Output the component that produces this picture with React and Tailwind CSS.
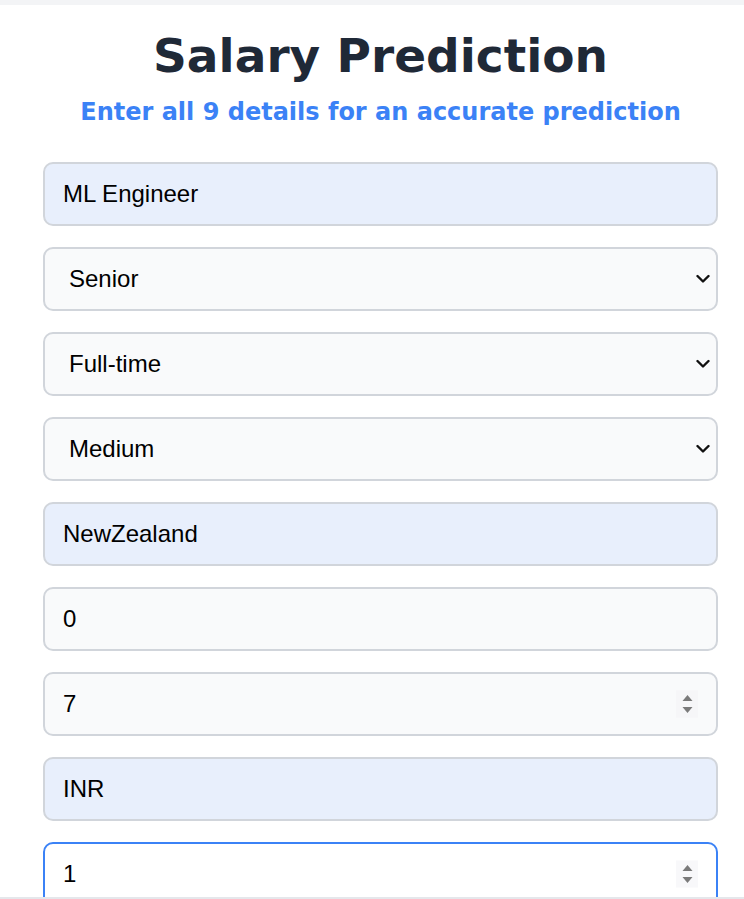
import React, { useState } from 'react';

function Chevron() {
  return (
    <svg
      className="pointer-events-none absolute right-[8px] top-1/2 -translate-y-1/2"
      width="14"
      height="9"
      viewBox="0 0 14 9"
      fill="none"
    >
      <path d="M1.5 1.5 L7 7 L12.5 1.5" stroke="#111" strokeWidth="2.4" strokeLinecap="round" strokeLinejoin="round" />
    </svg>
  );
}

function Spinner() {
  return (
    <div className="pointer-events-none absolute right-[20px] top-1/2 -translate-y-1/2 w-[22px] h-[27px] bg-[#f3f4f6]/60 flex flex-col items-center justify-center gap-[5px]">
      <svg width="11" height="7" viewBox="0 0 11 7">
        <path d="M5.5 0.5 L10.5 6.5 L0.5 6.5 Z" fill="#7a7a7a" />
      </svg>
      <svg width="11" height="7" viewBox="0 0 11 7">
        <path d="M0.5 0.5 L10.5 0.5 L5.5 6.5 Z" fill="#7a7a7a" />
      </svg>
    </div>
  );
}

export default function App() {
  const [form, setForm] = useState({
    job: 'ML Engineer',
    level: 'Senior',
    type: 'Full-time',
    size: 'Medium',
    country: 'NewZealand',
    remote: '0',
    years: '7',
    currency: 'INR',
    count: '1',
  });

  const set = (k) => (e) => setForm({ ...form, [k]: e.target.value });

  const shape = 'w-full h-[64px] rounded-[10px] border-2 px-[18px] text-[24px] text-black outline-none';
  const base = shape + ' border-[#d1d5db]';
  const filled = base + ' bg-[#e8effc]';
  const plain = base + ' bg-[#f9fafb]';
  const select = plain + ' appearance-none pl-[24px] pr-[40px]';
  const number =
    ' [appearance:textfield] [&::-webkit-inner-spin-button]:appearance-none [&::-webkit-outer-spin-button]:appearance-none';

  return (
    <div className="h-screen flex flex-col overflow-hidden bg-white font-['Liberation_Sans',Arial,sans-serif]">
      <div className="h-[5px] bg-[#f3f4f6] shrink-0" />
      <main className="flex-1 overflow-hidden pl-[43px] pr-[26px]">
        <h1 className="mt-[21px] text-center text-[47px] leading-[60px] font-bold text-[#1f2937] font-['DejaVu_Sans',sans-serif]">
          Salary Prediction
        </h1>
        <p className="mt-[11px] text-center text-[24px] leading-[30px] font-bold text-[#3b82f6] font-['DejaVu_Sans',sans-serif]">
          Enter all 9 details for an accurate prediction
        </p>

        <form className="mt-[35px] flex flex-col gap-[21px]">
          <input className={filled} value={form.job} onChange={set('job')} />
          <div className="relative">
            <select className={select} value={form.level} onChange={set('level')}>
              <option>Junior</option>
              <option>Mid</option>
              <option>Senior</option>
              <option>Executive</option>
            </select>
            <Chevron />
          </div>
          <div className="relative">
            <select className={select} value={form.type} onChange={set('type')}>
              <option>Full-time</option>
              <option>Part-time</option>
              <option>Contract</option>
              <option>Freelance</option>
            </select>
            <Chevron />
          </div>
          <div className="relative">
            <select className={select} value={form.size} onChange={set('size')}>
              <option>Small</option>
              <option>Medium</option>
              <option>Large</option>
            </select>
            <Chevron />
          </div>
          <input className={filled} value={form.country} onChange={set('country')} />
          <input className={plain} value={form.remote} onChange={set('remote')} />
          <div className="relative">
            <input type="number" className={plain + number} value={form.years} onChange={set('years')} />
            <Spinner />
          </div>
          <input className={filled} value={form.currency} onChange={set('currency')} />
          <div className="relative">
            <input
              type="number"
              className={shape + number + ' bg-white border-[#3b82f6]'}
              value={form.count}
              onChange={set('count')}
            />
            <Spinner />
          </div>
        </form>
      </main>
      <div className="h-[2px] bg-[#e5e7eb] shrink-0" />
    </div>
  );
}
